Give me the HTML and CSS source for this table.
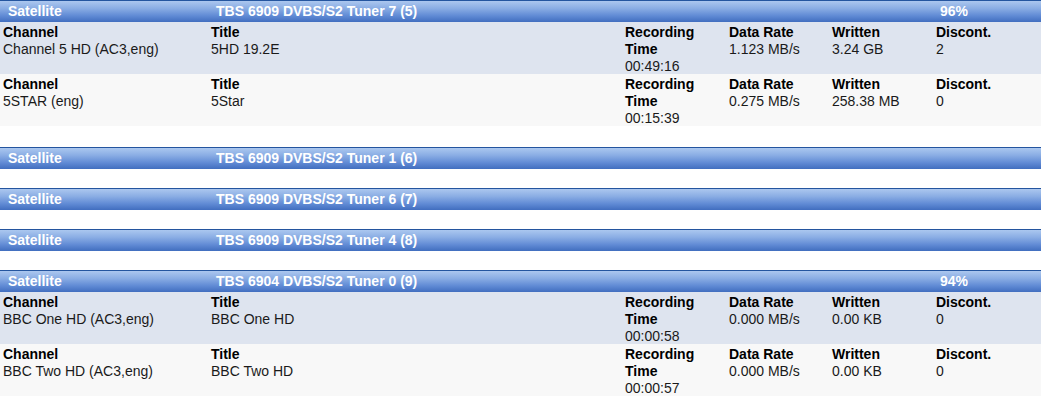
FILE: index.html
```html
<!DOCTYPE html>
<html>
<head>
<meta charset="utf-8">
<link rel="stylesheet" href="styles.css">
</head>
<body>
<div class="page">
  <section class="tuner busy">
    <div class="bar">
      <div class="bc">Satellite</div>
      <div class="bc span4">TBS 6909 DVBS/S2 Tuner 7 (5)</div>
      <div class="bc last">96%</div>
    </div>
    <div class="row odd">
      <div class="c"><b>Channel</b><br>Channel 5 HD (AC3,eng)</div>
      <div class="c"><b>Title</b><br>5HD 19.2E</div>
      <div class="c"><b>Recording Time</b><br>00:49:16</div>
      <div class="c"><b>Data Rate</b><br>1.123 MB/s</div>
      <div class="c"><b>Written</b><br>3.24 GB</div>
      <div class="c"><b>Discont.</b><br>2</div>
    </div>
    <div class="row even">
      <div class="c"><b>Channel</b><br>5STAR (eng)</div>
      <div class="c"><b>Title</b><br>5Star</div>
      <div class="c"><b>Recording Time</b><br>00:15:39</div>
      <div class="c"><b>Data Rate</b><br>0.275 MB/s</div>
      <div class="c"><b>Written</b><br>258.38 MB</div>
      <div class="c"><b>Discont.</b><br>0</div>
    </div>
  </section>
  <section class="tuner">
    <div class="bar">
      <div class="bc">Satellite</div>
      <div class="bc span4">TBS 6909 DVBS/S2 Tuner 1 (6)</div>
      <div class="bc last"></div>
    </div>
  </section>
  <section class="tuner">
    <div class="bar">
      <div class="bc">Satellite</div>
      <div class="bc span4">TBS 6909 DVBS/S2 Tuner 6 (7)</div>
      <div class="bc last"></div>
    </div>
  </section>
  <section class="tuner">
    <div class="bar">
      <div class="bc">Satellite</div>
      <div class="bc span4">TBS 6909 DVBS/S2 Tuner 4 (8)</div>
      <div class="bc last"></div>
    </div>
  </section>
  <section class="tuner busy">
    <div class="bar">
      <div class="bc">Satellite</div>
      <div class="bc span4">TBS 6904 DVBS/S2 Tuner 0 (9)</div>
      <div class="bc last">94%</div>
    </div>
    <div class="row odd">
      <div class="c"><b>Channel</b><br>BBC One HD (AC3,eng)</div>
      <div class="c"><b>Title</b><br>BBC One HD</div>
      <div class="c"><b>Recording Time</b><br>00:00:58</div>
      <div class="c"><b>Data Rate</b><br>0.000 MB/s</div>
      <div class="c"><b>Written</b><br>0.00 KB</div>
      <div class="c"><b>Discont.</b><br>0</div>
    </div>
    <div class="row even">
      <div class="c"><b>Channel</b><br>BBC Two HD (AC3,eng)</div>
      <div class="c"><b>Title</b><br>BBC Two HD</div>
      <div class="c"><b>Recording Time</b><br>00:00:57</div>
      <div class="c"><b>Data Rate</b><br>0.000 MB/s</div>
      <div class="c"><b>Written</b><br>0.00 KB</div>
      <div class="c"><b>Discont.</b><br>0</div>
    </div>
  </section>
</div>
</body>
</html>
```
FILE: styles.css
```css
html, body {
  margin: 0;
  padding: 0;
  background: #ffffff;
}
body {
  font-family: "Liberation Sans", Arial, sans-serif;
  font-size: 14px;
  line-height: 17px;
  color: #1a1a1a;
}
.page {
  display: flex;
  flex-direction: column;
  gap: 19px;
  width: 1041px;
}
.tuner {
  display: flex;
  flex-direction: column;
}
.tuner.busy {
  padding-bottom: 2px;
}
.bar, .row {
  display: grid;
  grid-template-columns: 208px 414px 104px 103px 104px 108px;
}
.bar {
  height: 21px;
  border-top: 1px solid #24559f;
  background: linear-gradient(to bottom, #abc7ef 0%, #8aade4 35%, #618bd5 70%, #416ebf 100%);
  color: #ffffff;
  font-weight: bold;
}
.bc {
  padding: 2px 0 0 8px;
  line-height: 17px;
  white-space: nowrap;
}
.bc.last {
  padding-left: 7px;
}
.span4 {
  grid-column: span 4;
}
.row {
  height: 52px;
}
.row.odd {
  background: #dee4ef;
}
.row.even {
  background: #f8f8f8;
}
.c {
  padding: 2px 3px 0 3px;
}
.c b {
  font-weight: bold;
  color: #000000;
}
```
